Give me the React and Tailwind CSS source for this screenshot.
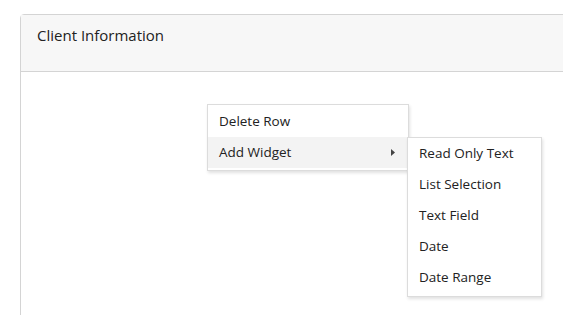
import { useState } from "react";

const widgets = ["Read Only Text", "List Selection", "Text Field", "Date", "Date Range"];

export default function App() {
  const [hover, setHover] = useState("Add Widget");

  return (
    <div
      className="relative h-[315px] w-[563px] overflow-hidden bg-white pl-[20px] pt-[14px] text-[#222]"
      style={{ fontFamily: '"Open Sans", "Noto Sans", sans-serif' }}
    >
      {/* Карточка */}
      <div className="flex h-[320px] w-[600px] flex-col rounded-tl-[4px] border border-[#d4d4d4] bg-white">
        <div className="flex h-[57px] items-start border-b border-[#d4d4d4] bg-[#f7f7f7] px-4 pt-[9px]">
          <span className="text-[15px] leading-[22px]">Client Information</span>
        </div>
        <div className="flex-1" />
      </div>

      {/* Контекстное меню */}
      <div className="absolute left-[207px] top-[104px] flex w-[202px] flex-col border border-[#dcdcdc] bg-white pt-[1px] pb-[2px] shadow-[1px_2px_3px_rgba(0,0,0,0.12)]">
        {["Delete Row", "Add Widget"].map((label) => (
          <div
            key={label}
            onMouseEnter={() => setHover(label)}
            className={`flex h-[31px] items-center justify-between pl-[11px] pr-[13px] text-[13.5px] ${
              hover === label ? "bg-[#f3f3f3]" : ""
            }`}
          >
            <span>{label}</span>
            {label === "Add Widget" && (
              <svg width="4" height="7" viewBox="0 0 4 7">
                <path d="M0 0 L4 3.5 L0 7 Z" fill="#444" />
              </svg>
            )}
          </div>
        ))}
      </div>

      {/* Подменю */}
      {hover === "Add Widget" && (
        <div className="absolute left-[407px] top-[137px] flex w-[135px] flex-col border border-[#dcdcdc] bg-white pb-[3px] shadow-[1px_2px_3px_rgba(0,0,0,0.12)]">
          {widgets.map((w) => (
            <div key={w} className="flex h-[31px] items-center pl-[11px] text-[13.5px]">
              {w}
            </div>
          ))}
        </div>
      )}
    </div>
  );
}
